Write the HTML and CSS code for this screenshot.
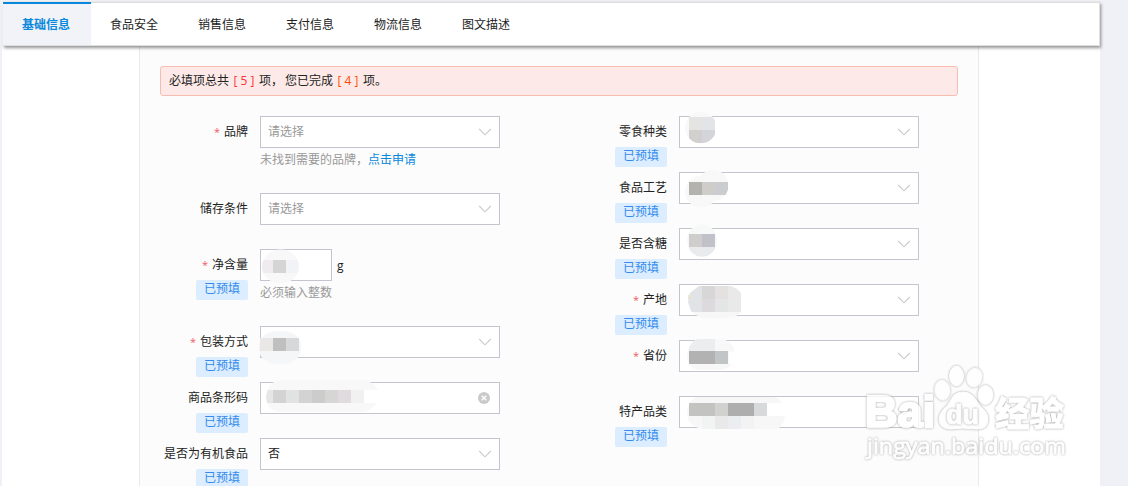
FILE: index.html
```html
<!DOCTYPE html>
<html lang="zh-CN">
<head>
<meta charset="utf-8">
<title>基础信息</title>
<link rel="stylesheet" href="styles.css">
</head>
<body>
<svg class="defs" width="0" height="0">
  <symbol id="chevron" viewBox="0 0 14 8"><path d="M1.200 1l5.800 5.800 5.800-5.800" fill="none" stroke="#cbcbcb" stroke-width="1.1"/></symbol>
</svg>
<div class="page">
  <nav class="tabs">
    <a class="tab tab-active">基础信息</a><a class="tab">食品安全</a><a class="tab">销售信息</a><a class="tab">支付信息</a><a class="tab">物流信息</a><a class="tab">图文描述</a>
  </nav>
  <main class="panel">
    <div class="alert"><span>必填项总共</span><span class="count red">[ 5 ]</span><span class="unit">项，</span><span>您已完成</span><span class="count orange">[ 4 ]</span><span>项。</span></div>
    <div class="columns">
      <section class="column">
        <div class="row tall">
          <div class="label"><span class="name"><i>*</i>品牌</span></div>
          <div class="control"><div class="box"><span class="hint">请选择</span><svg class="arrow"><use href="#chevron"/></svg></div><p class="help">未找到需要的品牌，<a>点击申请</a></p></div>
        </div>
        <div class="row">
          <div class="label"><span class="name">储存条件</span></div>
          <div class="control"><div class="box"><span class="hint">请选择</span><svg class="arrow"><use href="#chevron"/></svg></div></div>
        </div>
        <div class="row tall">
          <div class="label"><span class="name"><i>*</i>净含量</span><span class="tag">已预填</span></div>
          <div class="control"><div class="measure"><div class="box short"></div><span>g</span></div><p class="help">必须输入整数</p>
            <svg class="mosaic"><clipPath id="a"><ellipse cx="20.5" cy="17.5" rx="18.5" ry="17"/></clipPath><g clip-path="url(#a)"><path fill="#f8f8f9" d="M0-4h46v40H0z"/><path fill="#efebee" d="M0 11h13v13H0z"/><path fill="#d5d5d5" d="M13 11h13v13H13z"/><path fill="#f2f3f6" d="M26 11h13v13H26z"/></g></svg></div>
        </div>
        <div class="row">
          <div class="label"><span class="name"><i>*</i>包装方式</span><span class="tag">已预填</span></div>
          <div class="control"><div class="box"><svg class="arrow"><use href="#chevron"/></svg></div>
            <svg class="mosaic"><clipPath id="b"><rect x="-1" y="5" width="42" height="33" rx="19" ry="14"/><path d="M0 12h39v13H0z"/></clipPath><g clip-path="url(#b)"><path fill="#f5f6f7" d="M-1 0h46v40H-1z"/><path fill="#e9e8e6" d="M0 12h13v13H0z"/><path fill="#bfbfbf" d="M13 12h13v13H13z"/><path fill="#d7d8da" d="M26 12h13v13H26z"/></g></svg></div>
        </div>
        <div class="row">
          <div class="label"><span class="name">商品条形码</span><span class="tag">已预填</span></div>
          <div class="control"><div class="box"><svg class="clear" viewBox="0 0 12 12"><circle cx="6" cy="6" r="6" fill="#cacaca"/><path d="M3.7 3.7l4.6 4.6M8.3 3.7L3.7 8.3" stroke="#fff" stroke-width="1.3"/></svg></div>
            <svg class="mosaic"><clipPath id="c"><path d="M22-2h82q10 2 14 10v12q-6 8-14 10H18Q7 28 6 16 7 4 14 0z"/></clipPath><g clip-path="url(#c)"><path fill="#f8f8f9" d="M0-3h120v36H0z"/><path fill="#e6e6e6" d="M0 8h13v13H0z"/><path fill="#d3d3d3" d="M13 8h13v13H13zM39 8h13v13H39z"/><path fill="#e0e3e2" d="M26 8h13v13H26z"/><path fill="#ccc" d="M52 8h13v13H52z"/><path fill="#d6d6d4" d="M65 8h13v13H65z"/><path fill="#dfdbdf" d="M78 8h13v13H78z"/><path fill="#f2f1f2" d="M91 8h13v13H91z"/><path fill="#fff" d="M104 8h16v13h-16z"/></g></svg></div>
        </div>
        <div class="row">
          <div class="label"><span class="name">是否为有机食品</span><span class="tag">已预填</span></div>
          <div class="control"><div class="box"><span>否</span><svg class="arrow"><use href="#chevron"/></svg></div></div>
        </div>
      </section>
      <section class="column">
        <div class="row">
          <div class="label"><span class="name">零食种类</span><span class="tag">已预填</span></div>
          <div class="control"><div class="box"><svg class="arrow"><use href="#chevron"/></svg></div>
            <svg class="mosaic"><clipPath id="d"><circle cx="21.7" cy="11.7" r="15.7"/></clipPath><g clip-path="url(#d)"><path fill="#f8f8f8" d="M0-5h40v35H0z"/><path fill="#e4e4e3" d="M10 1h13v13H10z"/><path fill="#e3e4e8" d="M23 1h13v13H23z"/><path fill="#d1d0cf" d="M10 14h13v13H10z"/><path fill="#d4d5da" d="M23 14h13v13H23z"/><path fill="#fff" d="M36-5h5v40h-5z"/></g></svg></div>
        </div>
        <div class="row">
          <div class="label"><span class="name">食品工艺</span><span class="tag">已预填</span></div>
          <div class="control"><div class="box"><svg class="arrow"><use href="#chevron"/></svg></div>
            <svg class="mosaic"><clipPath id="e"><circle cx="22" cy="19.5" r="16"/><circle cx="34" cy="13.5" r="15.5"/></clipPath><g clip-path="url(#e)"><path fill="#f8f8f8" d="M0-5h55v45H0z"/><path fill="#b3b2ae" d="M10 10h13v13H10z"/><path fill="#cecdc9" d="M23 10h13v13H23z"/><path fill="#cbcccf" d="M36 10h13v13H36z"/><path fill="#fff" d="M49 1h3v30h-3z"/></g></svg></div>
        </div>
        <div class="row">
          <div class="label"><span class="name">是否含糖</span><span class="tag">已预填</span></div>
          <div class="control"><div class="box"><svg class="arrow"><use href="#chevron"/></svg></div>
            <svg class="mosaic"><clipPath id="f"><ellipse cx="23" cy="12.5" rx="15" ry="16.3"/></clipPath><g clip-path="url(#f)"><path fill="#f7f8f8" d="M0-5h42v38H0z"/><path fill="#cfcecd" d="M10 6h13v13H10z"/><path fill="#c1c2c9" d="M23 6h13v13H23z"/><path fill="#e9eaec" d="M10 19h26v12H10z"/></g></svg></div>
        </div>
        <div class="row">
          <div class="label"><span class="name"><i>*</i>产地</span><span class="tag">已预填</span></div>
          <div class="control"><div class="box"><svg class="arrow"><use href="#chevron"/></svg></div>
            <svg class="mosaic"><clipPath id="g"><path d="M20 2h32l6 3 4 4v19l-6 5q-18 3-36 0l-8-6-3-9 2-9z"/></clipPath><path fill="#fbe3a0" d="M9 11h3v4H9z"/><g clip-path="url(#g)"><path fill="#f7f7f7" d="M0 0h65v36H0z"/><path fill="#e2e3e7" d="M8 2h15v26H8z"/><path fill="#d7d7d8" d="M23 2h13v13H23z"/><path fill="#e3e2e0" d="M36 2h13v13H36z"/><path fill="#e9e9e9" d="M49 2h13v26H49z"/><path fill="#dcdadc" d="M23 15h13v13H23z"/><path fill="#e4e6e5" d="M36 15h13v13H36z"/></g></svg></div>
        </div>
        <div class="row">
          <div class="label"><span class="name"><i>*</i>省份</span></div>
          <div class="control"><div class="box"><svg class="arrow"><use href="#chevron"/></svg></div>
            <svg class="mosaic"><clipPath id="h"><path d="M18-1h26q8 3 11 9v4h-5v12h4q-5 5-12 6H18q-10-4-10-14Q8 5 18-1z"/></clipPath><g clip-path="url(#h)"><path fill="#f8f8f8" d="M0-2h60v36H0z"/><path fill="#ecedef" d="M10-1h26v12H10z"/><path fill="#b3b2b2" d="M10 11h26v13H10z"/><path fill="#c1c5c6" d="M36 11h13v13H36z"/></g></svg></div>
        </div>
        <div class="row">
          <div class="label"><span class="name">特产品类</span><span class="tag">已预填</span></div>
          <div class="control"><div class="box"><svg class="arrow"><use href="#chevron"/></svg></div>
            <svg class="mosaic"><clipPath id="i"><path d="M17 1h78q6 2 8 6l-2 4v9h5q-1 8-7 13H26q-16-1-18-14Q8 5 17 1z"/></clipPath><g clip-path="url(#i)"><path fill="#f7f7f7" d="M0 0h110v36H0z"/><path fill="#fff" d="M88 7h20v13H88z"/><path fill="#c3c3c2" d="M10 7h26v13H10z"/><path fill="#d1d1d0" d="M36 7h13v13H36z"/><path fill="#aeaeae" d="M49 7h26v13H49z"/><path fill="#d6dada" d="M75 7h13v13H75z"/><path fill="#f1f4f3" d="M23 20h13v13H23z"/><path fill="#e9e9ea" d="M36 20h13v13H36z"/><path fill="#ecedf1" d="M49 20h13v13H49z"/><path fill="#f3f3f3" d="M62 20h13v13H62z"/></g></svg></div>
        </div>
      </section>
    </div>
  </main>
</div>
<svg class="watermark" viewBox="0 0 220 110">
  <g class="mark">
    <text class="latin" x="5" y="67" font-size="45" textLength="70" lengthAdjust="spacingAndGlyphs">Bai</text>
    <ellipse cx="82.300" cy="30.300" rx="7.500" ry="10" transform="rotate(-6 82 30)"/>
    <ellipse cx="96.500" cy="16" rx="7" ry="10"/>
    <ellipse cx="114.500" cy="17.500" rx="7.500" ry="9.500" transform="rotate(12 114 17)"/>
    <ellipse cx="125.500" cy="35" rx="7.500" ry="9.500"/>
    <path d="M94 35q4-3 9-3 6 0 10 4l8 11q7 6 7 12 0 10-10 10-8 0-15-1-8 1-14 1-10-1-10-10 1-8 8-13z"/>
    <text class="latin du" x="86" y="63.500" font-size="27" textLength="33" lengthAdjust="spacingAndGlyphs">du</text>
    <text class="han" x="135" y="66" font-size="34.500" textLength="69">经验</text>
    <text class="url" x="7" y="94" font-size="22.500" textLength="199" lengthAdjust="spacingAndGlyphs">jingyan.baidu.com</text>
  </g>
</svg>
</body>
</html>
```

FILE: styles.css
```css
* { box-sizing: border-box; }
body {
  margin: 0;
  height: 486px;
  overflow: hidden;
  position: relative;
  background: #f0f1f6;
  color: #222;
  font: 12px/16px "Open Sans", "Noto Sans CJK SC", sans-serif;
}
.defs { position: absolute; }
.page {
  width: 1098px;
  height: 485px;
  margin: 1px 0 0 2px;
  background: #fff;
  border-top: 1px solid #ececec;
}
.tabs {
  display: flex;
  position: relative;
  height: 44px;
  margin-left: 1px;
  border: solid #dedede;
  border-width: 1px 1px 1px 0;
  background: #fff;
  box-shadow: 1px 2px 3px rgba(0, 0, 0, .42);
}
.tab {
  width: 88px;
  height: 43px;
  margin-top: -1px;
  padding-right: 2px;
  text-align: center;
  line-height: 46px;
}
.tab-active {
  background: #f1f3f8;
  box-shadow: inset 0 2px #0888dc;
  color: #0888dc;
  font-weight: bold;
}
.panel {
  width: 840px;
  height: 440px;
  margin-left: 137px;
  padding: 20px 20px 0;
  border: solid #e9e9e9;
  border-width: 0 1px;
  background: #fcfcfc;
  overflow: hidden;
}
.alert {
  display: flex;
  width: 798px;
  height: 30px;
  padding-left: 8px;
  border: 1px solid #f9bcb1;
  border-radius: 3px;
  background: #fdeae8;
  line-height: 28px;
  white-space: pre;
}
.count { width: 30px; text-align: center; }
.unit { width: 26px; }
.red { color: #ff3037; }
.orange { color: #ff4b00; }
.columns { display: flex; padding-top: 20px; }
.column { width: 419px; flex: none; }
.row { display: flex; gap: 12px; height: 56px; }
.row.tall { height: 77px; }
.label {
  display: flex;
  flex-direction: column;
  align-items: flex-end;
  width: 88px;
  white-space: nowrap;
}
.name { height: 31px; line-height: 32px; }
.name i { margin-right: 4px; color: #ef5b66; font-size: 11px; font-style: normal; }
.tag {
  width: 52px;
  height: 20px;
  border-radius: 2px;
  background: #dbedff;
  color: #348bed;
  line-height: 18px;
  text-align: center;
}
.control { position: relative; width: 240px; }
.box {
  display: flex;
  align-items: center;
  width: 240px;
  height: 32px;
  padding: 0 7px;
  border: 1px solid #c4c6cf;
  background: #fff;
}
.short { width: 72px; }
.hint { color: #999; }
.arrow { width: 14px; height: 8px; margin-left: auto; }
.clear { width: 12px; height: 12px; margin: 0 2px 0 auto; }
.measure { display: flex; gap: 5px; line-height: 34px; height: 32px; }
.help { margin: 4px 0 0; color: #999; white-space: nowrap; }
.help a { color: #0888dc; }
.mosaic {
  position: absolute;
  left: 0;
  top: 0;
  width: 120px;
  height: 40px;
  overflow: visible;
}
.watermark {
  position: absolute;
  left: 860px;
  top: 360px;
  width: 220px;
  height: 110px;
}
.mark {
  fill: #fff;
  stroke: #fff;
  stroke-width: 1;
  stroke-linejoin: round;
  opacity: .82;
}
.mark > * { filter: drop-shadow(0 0 1px #8f8f8f); }
.latin { font-family: "Liberation Sans", sans-serif; font-weight: bold; stroke-width: 2.5; }
.du { stroke-width: 1; }
.han { font-family: "Noto Sans CJK SC", sans-serif; font-weight: 900; stroke-width: .8; }
.url { font-family: "Open Sans", sans-serif; font-weight: 400; stroke-width: .8; }
```
